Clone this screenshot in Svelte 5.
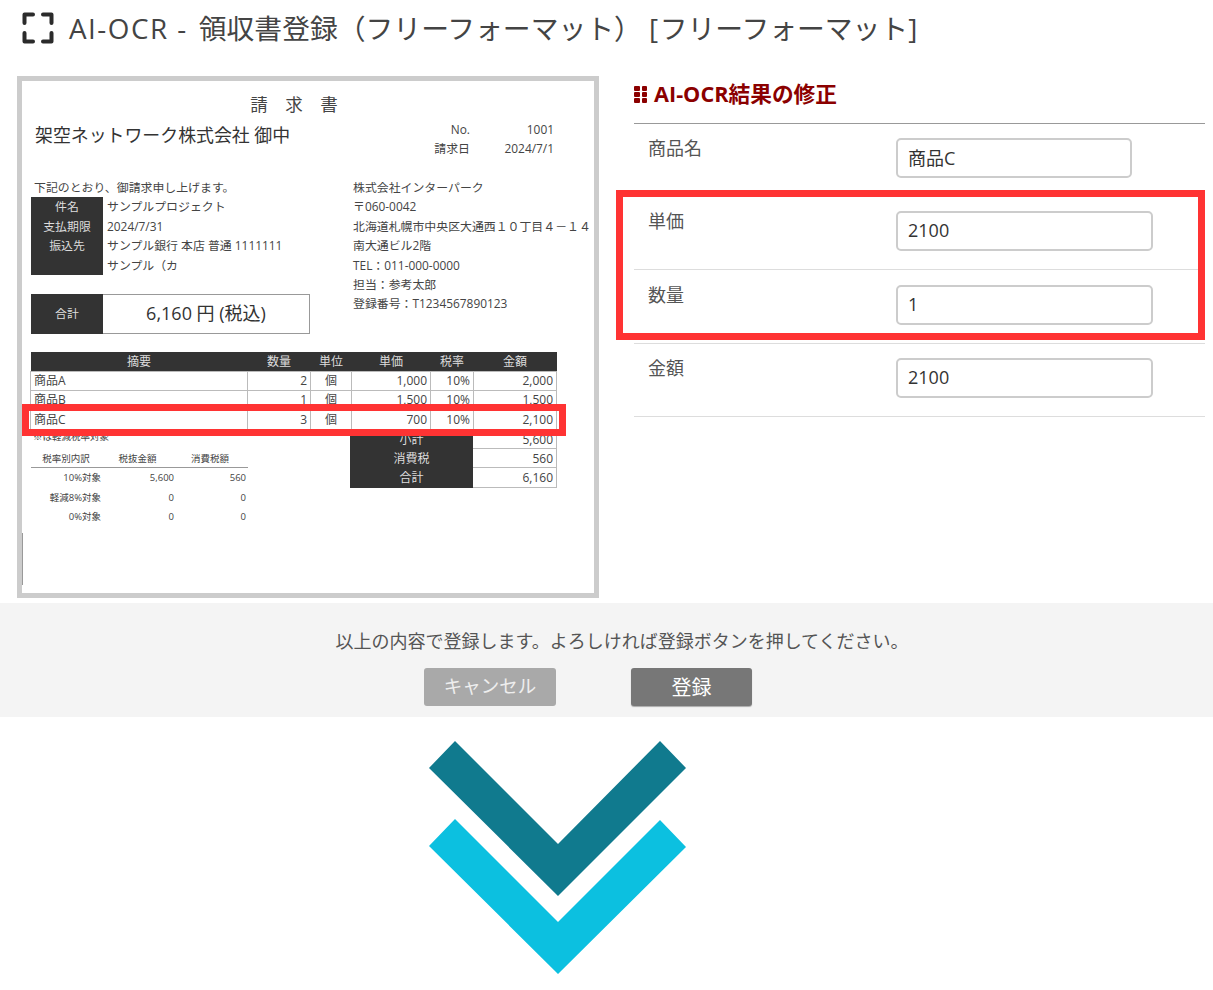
<script>
  const items = [
    ['商品A', '2', '個', '1,000', '10%', '2,000'],
    ['商品B', '1', '個', '1,500', '10%', '1,500'],
    ['商品C', '3', '個', '700', '10%', '2,100']
  ];
  const tax = [
    ['10%対象', '5,600', '560'],
    ['軽減8%対象', '0', '0'],
    ['0%対象', '0', '0']
  ];
  const totals = [['小計', '5,600'], ['消費税', '560'], ['合計', '6,160']];
  const addr = ['株式会社インターパーク', '〒060-0042', '北海道札幌市中央区大通西１０丁目４－１４', '南大通ビル2階', 'TEL：011-000-0000', '担当：参考太郎', '登録番号：T1234567890123'];
  const fields = [
    { label: '商品名', value: '商品C', short: true },
    { label: '単価', value: '2100' },
    { label: '数量', value: '1' },
    { label: '金額', value: '2100' }
  ];
</script>

<div class="page">
  <header class="head">
    <svg class="scan" viewBox="0 0 32 32" width="32" height="32" aria-hidden="true">
      <path d="M11 2.500H2.500V11M21 2.500H29.500V11M2.500 21V29.500H11M29.500 21V29.500H21" fill="none" stroke="#2b2b2b" stroke-width="4" stroke-linejoin="round" stroke-linecap="round" />
    </svg>
    <h1><span class="lat lead">AI-OCR -</span>領収書登録（フリーフォーマット） <span class="lat">[</span>フリーフォーマット<span class="lat">]</span></h1>
  </header>

  <main class="main">
    <section class="invoice">
      <div class="doc-title">請　求　書</div>
      <div class="top">
        <div class="to">架空ネットワーク株式会社 御中</div>
        <dl class="meta">
          <dt>No.</dt><dd>1001</dd>
          <dt>請求日</dt><dd>2024/7/1</dd>
        </dl>
      </div>

      <div class="info">
        <div class="info-left">
          <div class="line">下記のとおり、御請求申し上げます。</div>
          <div class="subject">
            <div class="dark">
              <div class="line">件名</div>
              <div class="line">支払期限</div>
              <div class="line">振込先</div>
              <div class="line"></div>
            </div>
            <div>
              <div class="line">サンプルプロジェクト</div>
              <div class="line">2024/7/31</div>
              <div class="line">サンプル銀行 本店 普通 1111111</div>
              <div class="line">サンプル（カ</div>
            </div>
          </div>
          <div class="sum">
            <div class="sum-label">合計</div>
            <div class="sum-value">6,160 円 (税込)</div>
          </div>
        </div>
        <div class="info-right">
          {#each addr as a}<div class="line">{a}</div>{/each}
        </div>
      </div>

      <table class="items">
        <colgroup>
          <col class="c1" /><col class="c2" /><col class="c3" /><col class="c4" /><col class="c5" /><col class="c6" />
        </colgroup>
        <thead>
          <tr><th>摘要</th><th>数量</th><th>単位</th><th>単価</th><th>税率</th><th>金額</th></tr>
        </thead>
        <tbody>
          {#each items as r}
            <tr>
              <td class="l">{r[0]}</td><td>{r[1]}</td><td class="c">{r[2]}</td><td>{r[3]}</td><td>{r[4]}</td><td>{r[5]}</td>
            </tr>
          {/each}
        </tbody>
      </table>

      <div class="lower">
        <div class="tax">
          <div class="note">※は軽減税率対象</div>
          <div class="tax-row tax-head"><span>税率別内訳</span><span>税抜金額</span><span>消費税額</span></div>
          {#each tax as t}
            <div class="tax-row"><span>{t[0]}</span><span>{t[1]}</span><span>{t[2]}</span></div>
          {/each}
        </div>
        <div class="totals">
          {#each totals as t}
            <div class="t-label">{t[0]}</div><div class="t-val">{t[1]}</div>
          {/each}
        </div>
      </div>
      <div class="mark mark-row"></div>
      <div class="edge"></div>
    </section>

    <section class="panel">
      <h2><span class="dots"><i></i><i></i><i></i><i></i><i></i><i></i></span>AI-OCR結果の修正</h2>
      <div class="form">
        {#each fields as f}
          <div class="field">
            <span class="f-label">{f.label}</span>
            <input class:short={f.short} value={f.value} readonly aria-label={f.label} />
          </div>
        {/each}
      </div>
      <div class="mark mark-form"></div>
    </section>
  </main>

  <section class="confirm">
    <p>以上の内容で登録します。よろしければ登録ボタンを押してください。</p>
    <div class="btns">
      <button class="cancel">キャンセル</button>
      <button class="ok">登録</button>
    </div>
  </section>

  <svg class="chev" viewBox="0 0 260 236" width="260" height="236" aria-hidden="true">
    <polygon fill="#0cc0e0" points="1,106 27,79 130,182 232,80 258,107 130,234" />
    <polygon fill="#107a8e" points="1,28 27,1 130,104 232,1 258,28 130,156" />
  </svg>
</div>

<style>
  :global(body) {
    margin: 0;
    background: #fff;
  }
  .page {
    width: 1213px;
    height: 990px;
    overflow: hidden;
    font-family: "Open Sans", "Noto Sans CJK JP", sans-serif;
    color: #555;
  }
  .head {
    height: 56px;
    display: flex;
    align-items: center;
    padding-left: 22px;
    gap: 15px;
  }
  .scan { flex: none; margin-top: -1px; }
  h1 {
    margin: -2px 0 0;
    font-size: 27.8px;
    font-weight: 400;
    color: #444;
    white-space: nowrap;
  }
  .lat { letter-spacing: 1.5px; }
  .lead { margin-right: 11px; }
  .main {
    position: relative;
    display: flex;
    padding: 20px 8px 0 17px;
    height: 547px;
    box-sizing: border-box;
    gap: 35px;
  }
  .invoice {
    position: relative;
    width: 582px;
    height: 522px;
    flex: none;
    box-sizing: border-box;
    border: 5px solid #ccc;
    padding: 12px 9px 0;
    font-size: 11.9px;
    color: #444;
  }
  .edge {
    position: absolute;
    left: 0;
    top: 452px;
    width: 1px;
    height: 52px;
    background: #999;
  }
  .doc-title {
    text-align: center;
    font-size: 17.5px;
    line-height: 22px;
    margin-right: 28px;
  }
  .top {
    display: flex;
    justify-content: space-between;
    height: 63px;
  }
  .to {
    font-size: 17.9px;
    line-height: 24px;
    margin: 8px 0 0 4px;
    color: #333;
  }
  .meta {
    margin: 5px 31px 0 0;
    display: grid;
    grid-template-columns: auto 84px;
    grid-auto-rows: 19.4px;
    line-height: 19.4px;
    text-align: right;
  }
  .meta dt, .meta dd { margin: 0; }
  .info {
    display: flex;
    height: 173.500px;
  }
  .info-left { width: 322px; flex: none; }
  .line { height: 19.4px; line-height: 19.4px; white-space: nowrap; }
  .info-left > .line { padding-left: 3px; }
  .subject { display: flex; gap: 4px; }
  .dark {
    width: 72px;
    background: #333;
    color: #ddd;
    text-align: center;
    flex: none;
  }
  .sum {
    display: flex;
    width: 279px;
    height: 40px;
    margin-top: 19px;
    box-sizing: border-box;
    border: 1px solid #999;
  }
  .sum-label {
    width: 72px;
    margin: -1px 0 -1px -1px;
    padding-bottom: 3px;
    box-sizing: border-box;
    background: #333;
    color: #ddd;
    display: flex;
    align-items: center;
    justify-content: center;
  }
  .sum-value {
    flex: 1;
    display: flex;
    align-items: center;
    justify-content: center;
    padding-bottom: 4px;
    font-size: 18px;
    color: #333;
  }
  .items {
    border-collapse: collapse;
    table-layout: fixed;
    width: 526px;
    margin-left: -1px;
    font-size: 12px;
    line-height: 15px;
    color: #444;
  }
  .c1 { width: 217px; }
  .c2 { width: 63px; }
  .c3 { width: 41px; }
  .c4 { width: 79px; }
  .c5 { width: 43px; }
  .c6 { width: 83px; }
  .items th {
    background: #333;
    color: #ddd;
    font-weight: 400;
    height: 19.4px;
    padding: 0;
  }
  .items td {
    height: 19.4px;
    padding: 0 3px 1px;
    border: 1px solid #bbb;
    text-align: right;
    box-sizing: border-box;
  }
  .items td.l { text-align: left; }
  .items td.c { text-align: center; }
  .lower {
    display: flex;
    justify-content: space-between;
    width: 526px;
  }
  .tax { width: 217px; font-size: 9.5px; }
  .note { height: 18.500px; line-height: 14px; padding-left: 2px; }
  .tax-row {
    display: grid;
    grid-template-columns: 70px 73px 72px;
    height: 19.5px;
    line-height: 19.5px;
    text-align: right;
    padding-right: 2px;
  }
  .tax-head {
    text-align: center;
    border-bottom: 1px solid #999;
    box-sizing: border-box;
  }
  .totals {
    display: grid;
    grid-template-columns: 123px 84px;
    grid-auto-rows: 19.4px;
    line-height: 19.4px;
    margin-top: -0.500px;
    height: 59px;
    font-size: 12px;
  }
  .t-label { background: #333; color: #ddd; text-align: center; }
  .t-val {
    text-align: right;
    padding-right: 3px;
    border: 1px solid #bbb;
    border-width: 0 1px 1px 0;
  }
  .panel {
    flex: 1;
    min-width: 0;
  }
  h2 {
    margin: 0;
    height: 47.500px;
    box-sizing: border-box;
    border-bottom: 1px solid #999;
    display: flex;
    align-items: flex-start;
    gap: 7px;
    font-size: 21.7px;
    line-height: 36px;
    font-weight: 700;
    color: #8b0000;
    white-space: nowrap;
  }
  .dots {
    display: grid;
    grid-template-columns: 5.500px 5.500px;
    grid-auto-rows: 5px;
    gap: 1px 2px;
    margin-top: 10px;
  }
  .dots i { background: #8b0000; display: block; border-radius: 1px; }
  .field {
    height: 73.4px;
    box-sizing: border-box;
    border-bottom: 1px solid #ddd;
    display: flex;
    padding: 14.500px 0 0 14px;
  }
  .f-label {
    width: 248px;
    font-size: 18px;
    line-height: 20px;
    color: #555;
  }
  input {
    width: 257px;
    height: 40px;
    box-sizing: border-box;
    border: 2px solid #ccc;
    border-radius: 5px;
    padding: 0 10px 2px;
    font: 18px "Open Sans", "Noto Sans CJK JP", sans-serif;
    color: #333;
    background: #fff;
    outline: none;
  }
  input.short { width: 236px; }
  .mark {
    position: absolute;
    border: 7px solid #ff3333;
    box-sizing: border-box;
  }
  .mark-row {
    left: 0;
    top: 323px;
    width: 544px;
    height: 32px;
  }
  .mark-form {
    left: 616px;
    top: 134px;
    width: 589px;
    height: 150px;
  }
  .confirm {
    background: #f4f4f4;
    height: 114px;
    box-sizing: border-box;
    padding-top: 26px;
  }
  .confirm p {
    margin: 0 0 15px;
    padding-left: 31px;
    text-align: center;
    font-size: 18px;
    line-height: 24px;
    color: #555;
  }
  .btns {
    display: flex;
    padding-left: 424px;
    gap: 75px;
  }
  button {
    height: 38px;
    border: 0;
    border-radius: 3px;
    padding: 0;
    font: 20px "Open Sans", "Noto Sans CJK JP", sans-serif;
  }
  .cancel { width: 132px; background: #a9a9a9; color: #eee; font-size: 18.5px; padding-bottom: 5px; }
  .ok { width: 121px; background: #777; color: #fff; box-shadow: 0 1px 1px #aaa; padding-bottom: 1px; }
  .chev {
    display: block;
    margin: 23px 0 0 428px;
  }
</style>
